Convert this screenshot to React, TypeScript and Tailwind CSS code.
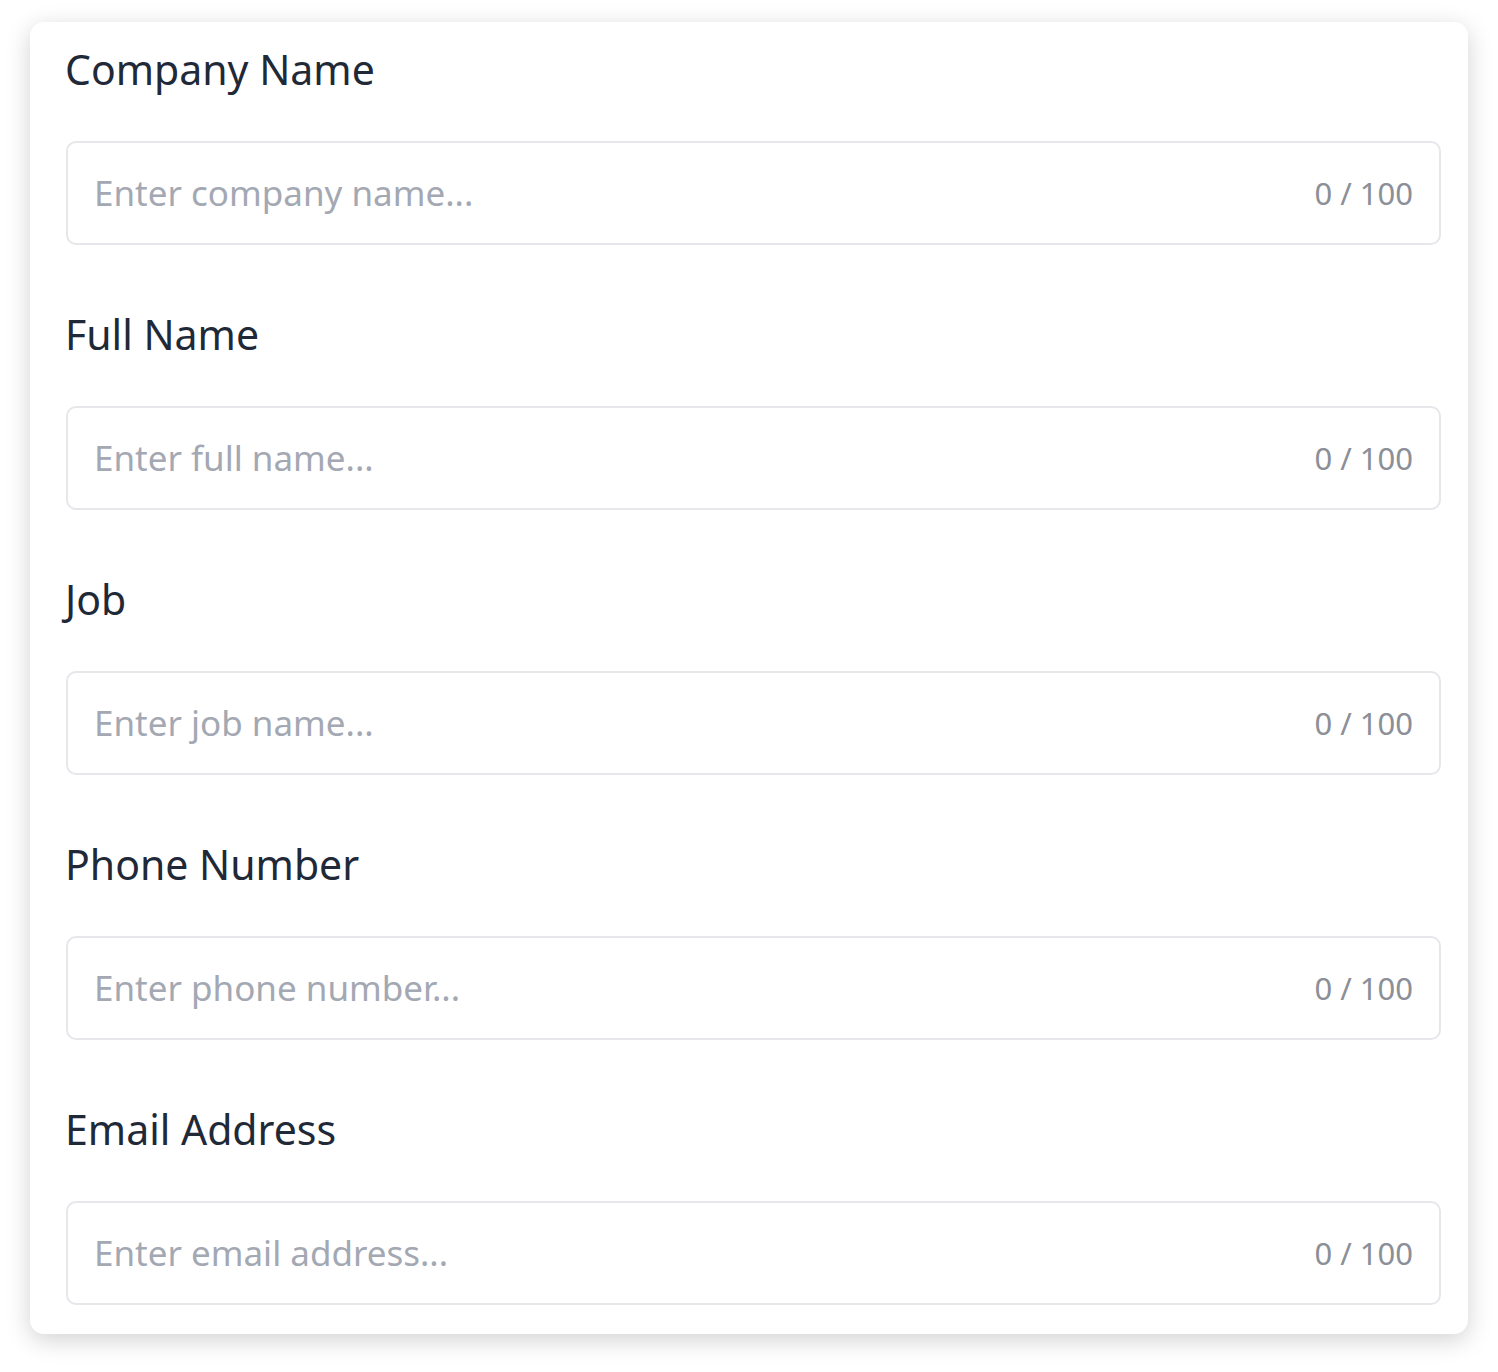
import React from "react";

const fields = [
  { label: "Company Name", placeholder: "Enter company name..." },
  { label: "Full Name", placeholder: "Enter full name..." },
  { label: "Job", placeholder: "Enter job name..." },
  { label: "Phone Number", placeholder: "Enter phone number..." },
  { label: "Email Address", placeholder: "Enter email address..." },
];

export default function App() {
  return (
    <div className="min-h-[1372px] w-[1498px] bg-white pt-[22px] pl-[30px]" style={{ fontFamily: '"Noto Sans", "Open Sans", sans-serif' }}>
      <div className="w-[1438px] h-[1312px] rounded-[14px] bg-white shadow-[0_6px_24px_rgba(0,0,0,0.18)] pt-[19px] pl-[36px] pr-[27px]">
        <div className="flex flex-col gap-[61px]">
          {fields.map((f) => (
            <div key={f.label} className="flex flex-col">
              <label className="text-[41px] leading-[56px] text-[#1f2937] -ml-[1px]">{f.label}</label>
              <div className="mt-[44px] h-[104px] rounded-[10px] border-2 border-[#e5e7eb] flex items-center pl-[26px] pr-[26px]">
                <input
                  className="flex-1 bg-transparent outline-none text-[35px] text-[#1f2937] placeholder:text-[#a3a8b3]"
                  placeholder={f.placeholder}
                />
                <span className="text-[31px] text-[#8b8f97]">0 / 100</span>
              </div>
            </div>
          ))}
        </div>
      </div>
    </div>
  );
}
